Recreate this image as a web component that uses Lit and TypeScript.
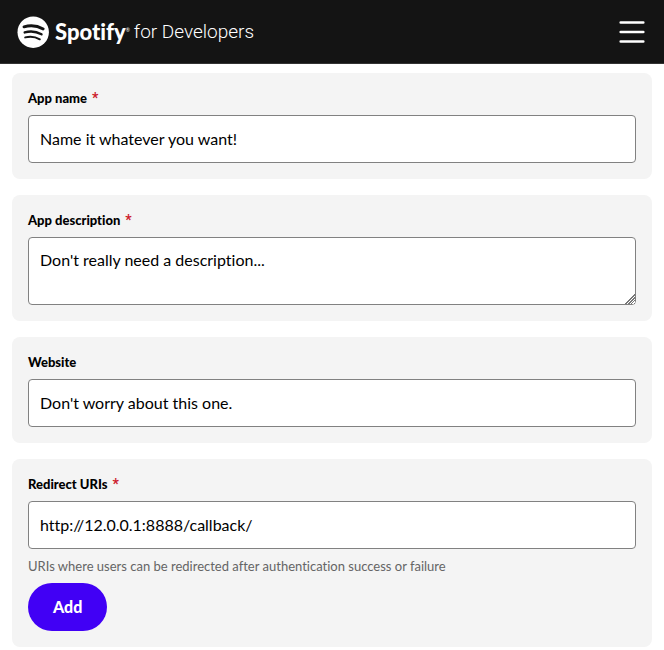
import { LitElement, html, css, nothing } from "lit";
import { customElement } from "lit/decorators.js";

interface Field {
  id: string;
  label: string;
  value: string;
  required: boolean;
  multiline?: boolean;
  hint?: string;
  action?: string;
}

const FIELDS: Field[] = [
  { id: "name", label: "App name", value: "Name it whatever you want!", required: true },
  { id: "description", label: "App description", value: "Don't really need a description...", required: true, multiline: true },
  { id: "website", label: "Website", value: "Don't worry about this one.", required: false },
  {
    id: "redirect",
    label: "Redirect URIs",
    value: "http://12.0.0.1:8888/callback/",
    required: true,
    hint: "URIs where users can be redirected after authentication success or failure",
    action: "Add",
  },
];

@customElement("app-root")
export class AppRoot extends LitElement {
  static styles = css`
    :host {
      display: block;
      background: #fff;
      color: #000;
      font-family: Lato, "Liberation Sans", sans-serif;
      font-variant-ligatures: none;
    }
    * {
      box-sizing: border-box;
    }
    .bar {
      display: flex;
      align-items: center;
      justify-content: space-between;
      height: 64px;
      padding: 0 16px 0 17px;
      background: #141414;
      border-bottom: 1px solid #333;
    }
    .brand {
      display: flex;
      align-items: center;
      color: #fff;
      text-decoration: none;
      line-height: 32px;
      white-space: nowrap;
    }
    .mark {
      width: 32px;
      height: 32px;
      margin-right: 6px;
    }
    .word {
      font-size: 22px;
      font-weight: 900;
    }
    .reg {
      align-self: flex-start;
      font-size: 5px;
      line-height: 28px;
      margin-right: 4px;
    }
    .suffix {
      font-family: Roboto, Lato, sans-serif;
      font-size: 19px;
      font-weight: 300;
    }
    .menu {
      display: flex;
      padding: 0;
      border: 0;
      background: none;
      color: #fff;
    }
    .menu svg {
      width: 32px;
      height: 32px;
    }
    .form {
      display: flex;
      flex-direction: column;
      gap: 16px;
      padding: 9px 12px 3px;
    }
    .card {
      display: flex;
      flex-direction: column;
      gap: 8px;
      padding: 16px;
      border-radius: 8px;
      background: #f4f4f4;
    }
    .label {
      font-size: 13px;
      line-height: 18px;
      font-weight: 900;
    }
    .star {
      margin-left: 2px;
      color: #cd1a2b;
      font-family: Roboto, sans-serif;
      font-size: 14px;
      font-weight: 700;
      line-height: 1;
    }
    .control {
      display: block;
      width: 100%;
      height: 48px;
      margin: 0;
      padding: 0 11px 2px;
      border: 1px solid #818181;
      border-radius: 4px;
      background: #fff;
      color: #000;
      font: inherit;
      font-variant-ligatures: none;
      font-size: 16px;
      line-height: 24px;
      outline: none;
    }
    .area {
      height: 68px;
      padding: 10px 11px;
      resize: vertical;
    }
    .area::-webkit-resizer {
      background:
        linear-gradient(135deg, #fff 66%, transparent 66%),
        repeating-linear-gradient(135deg, #777 0 1px, #fff 1px 2px);
    }
    .hint {
      margin: 0;
      color: #656565;
      font-size: 13px;
      line-height: 18px;
    }
    .add {
      align-self: flex-start;
      height: 48px;
      padding: 0 25px 1px;
      border: 0;
      border-radius: 24px;
      background: #4100f5;
      color: #fff;
      font: inherit;
      font-size: 16px;
      font-weight: 900;
    }
  `;

  private field(f: Field) {
    return html`
      <div class="card">
        <label class="label" for=${f.id}
          >${f.label}${f.required ? html` <span class="star">*</span>` : nothing}</label
        >
        ${f.multiline
          ? html`<textarea class="control area" id=${f.id} .value=${f.value}></textarea>`
          : html`<input class="control" id=${f.id} type="text" .value=${f.value} />`}
        ${f.hint ? html`<p class="hint">${f.hint}</p>` : nothing}
        ${f.action ? html`<button class="add" type="button">${f.action}</button>` : nothing}
      </div>
    `;
  }

  render() {
    return html`
      <header class="bar">
        <a class="brand" href="#">
          <svg class="mark" viewBox="0 0 32 32" aria-hidden="true">
            <circle cx="16.2" cy="16.2" r="15.7" fill="#fff" />
            <g fill="none" stroke="#141414" stroke-linecap="round">
              <path d="M7 10.8C13 9 20.500 9.700 26.200 12.900" stroke-width="2.9" />
              <path d="M7.700 16.400C13 14.800 19.500 15.500 24.500 18.300" stroke-width="2.4" />
              <path d="M8.200 21.400C13 20.200 18.300 20.700 22.800 23.300" stroke-width="2" />
            </g>
          </svg>
          <span class="word">Spotify</span><span class="reg">®</span>
          <span class="suffix">for Developers</span>
        </a>
        <button class="menu" type="button" aria-label="Menu">
          <svg viewBox="0 0 32 32" fill="none" stroke="currentColor" stroke-width="2.6" stroke-linecap="round">
            <path d="M4.7 6.5H27.3M4.7 16H27.3M4.7 25.5H27.3" />
          </svg>
        </button>
      </header>
      <form class="form">${FIELDS.map((f) => this.field(f))}</form>
    `;
  }
}
